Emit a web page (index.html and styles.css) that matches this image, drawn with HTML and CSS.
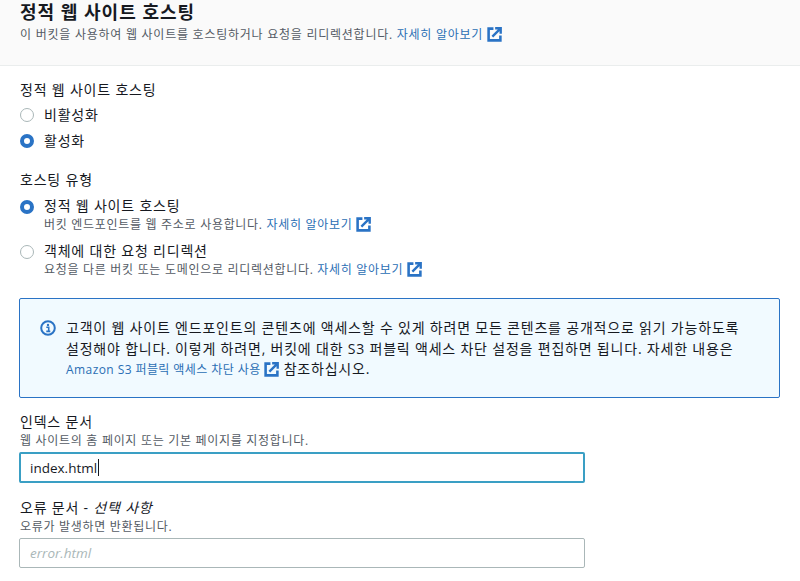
FILE: index.html
```html
<!DOCTYPE html>
<html lang="ko">
<head>
<meta charset="utf-8">
<title>정적 웹 사이트 호스팅</title>
<link rel="stylesheet" href="styles.css">
</head>
<body>
<svg class="sprite" width="0" height="0" aria-hidden="true">
  <symbol id="ext" viewBox="0 0 14 14">
    <path d="M6 1.5H1.5v11h11V8" fill="none" stroke="currentColor" stroke-width="2.4"/>
    <path d="M5 9 12 2M7.6 1.2h5.2v5.2" fill="none" stroke="currentColor" stroke-width="2.2"/>
  </symbol>
</svg>
<header class="head">
  <h1 class="title">정적 웹 사이트 호스팅</h1>
  <p class="desc">이 버킷을 사용하여 웹 사이트를 호스팅하거나 요청을 리디렉션합니다. <a class="link">자세히 알아보기 <svg class="ext"><use href="#ext"/></svg></a></p>
</header>
<main class="body">
  <section class="group group-a">
    <div class="label">정적 웹 사이트 호스팅</div>
    <div class="radio-row"><span class="radio"></span><span class="radio-text">비활성화</span></div>
    <div class="radio-row"><span class="radio on"></span><span class="radio-text">활성화</span></div>
  </section>
  <section class="group group-b">
    <div class="label">호스팅 유형</div>
    <div class="radio-row rich"><span class="radio on"></span><div><div class="radio-text">정적 웹 사이트 호스팅</div><div class="hint">버킷 엔드포인트를 웹 주소로 사용합니다. <a class="link">자세히 알아보기 <svg class="ext"><use href="#ext"/></svg></a></div></div></div>
    <div class="radio-row rich"><span class="radio"></span><div><div class="radio-text">객체에 대한 요청 리디렉션</div><div class="hint">요청을 다른 버킷 또는 도메인으로 리디렉션합니다. <a class="link">자세히 알아보기 <svg class="ext"><use href="#ext"/></svg></a></div></div></div>
  </section>
  <section class="info">
    <svg class="info-icon" viewBox="0 0 16 16"><circle cx="8" cy="8" r="6.8" fill="none" stroke="currentColor" stroke-width="2"/><circle cx="8" cy="4.9" r="1.2" fill="currentColor"/><path d="M6.3 7.2h2.4v4M6.3 11.4h4" fill="none" stroke="currentColor" stroke-width="1.6"/></svg>
    <div class="info-text">
      <p>고객이 웹 사이트 엔드포인트의 콘텐츠에 액세스할 수 있게 하려면 모든 콘텐츠를 공개적으로 읽기 가능하도록</p>
      <p>설정해야 합니다. 이렇게 하려면, 버킷에 대한 S3 퍼블릭 액세스 차단 설정을 편집하면 됩니다. 자세한 내용은</p>
      <p><a class="link small">Amazon S3 퍼블릭 액세스 차단 사용 <svg class="ext"><use href="#ext"/></svg></a> 참조하십시오.</p>
    </div>
  </section>
  <section class="field field-a">
    <label class="label">인덱스 문서</label>
    <div class="hint">웹 사이트의 홈 페이지 또는 기본 페이지를 지정합니다.</div>
    <div class="input-wrap"><input class="input focus" value="index.html"><span class="caret"></span></div>
  </section>
  <section class="field field-b">
    <label class="label">오류 문서 - <em>선택 사항</em></label>
    <div class="hint">오류가 발생하면 반환됩니다.</div>
    <input class="input" placeholder="error.html">
  </section>
</main>
</body>
</html>
```
FILE: styles.css
```css
* { box-sizing: border-box; }
html, body { margin: 0; height: 581px; overflow: hidden; }
body {
  background: #fff;
  color: #16191f;
  font-family: "Open Sans", "Noto Sans CJK KR", sans-serif;
  font-size: 14px;
  letter-spacing: 0.8px;
}
.sprite { position: absolute; }
.head {
  height: 66px;
  padding: 0 20px;
  background: #fafafa;
  border-bottom: 1px solid #eaeded;
}
.title { margin: 0; font-size: 18px; line-height: 24px; font-weight: 700; letter-spacing: 1px; }
.desc { margin: 2px 0 0; font-size: 12px; line-height: 18px; color: #545b64; letter-spacing: 0.75px; }
.link { color: #2a6eb4; }
.ext { width: 15px; height: 15px; vertical-align: -3px; color: #2a73c5; }
.body { padding: 0 20px; }
.label { display: block; line-height: 18px; font-size: 14px; }
.group-a { padding-top: 15px; }
.group-a .label { margin-bottom: 3px; }
.group-b { padding-top: 17px; }
.radio-row { display: flex; gap: 10px; align-items: center; height: 26px; }
.radio-row.rich { height: auto; align-items: flex-start; margin-top: 8px; }
.rich .radio { margin-top: 3px; }
.rich + .rich { margin-top: 8px; }
.rich .hint { margin-top: 1px; }
.radio {
  flex: none;
  width: 14px;
  height: 14px;
  border-radius: 50%;
  border: 1px solid #aab7b8;
  background: #fff;
}
.radio.on { border: 4px solid #2a73c5; }
.radio-text { line-height: 18px; }
.hint { font-size: 12px; line-height: 18px; color: #545b64; letter-spacing: 0.7px; }
.info {
  display: flex;
  gap: 10px;
  width: 761px;
  height: 100px;
  margin: 19px 0 0 -1px;
  padding: 19px 20px;
  background: #f1faff;
  border: 1px solid #2a73c5;
  border-radius: 2px;
}
.info-icon { flex: none; width: 16px; height: 16px; margin-top: 2px; color: #2a73c5; }
.info-text p { margin: 0; line-height: 20.5px; white-space: nowrap; }
.link.small { font-size: 12px; letter-spacing: 0.42px; }
.field-a { padding-top: 15px; }
.field-b { padding-top: 16px; }
.field .hint { margin-top: 1px; }
.input-wrap { position: relative; width: 567px; }
.input {
  display: block;
  width: 566px;
  height: 30px;
  margin: 2px 0 0 -1px;
  padding: 0 10px;
  border: 1px solid #aab7b8;
  border-radius: 2px;
  background: #fff;
  color: #16191f;
  font: inherit;
  font-size: 13.5px;
  letter-spacing: 0;
  outline: none;
}
.input.focus { height: 31px; border: 2px solid #3a9fc4; padding: 0 9px; }
.input::placeholder { color: #aab7b8; font-style: italic; opacity: 1; }
.caret { position: absolute; left: 78px; top: 7px; width: 1px; height: 17px; background: #16191f; }
```
